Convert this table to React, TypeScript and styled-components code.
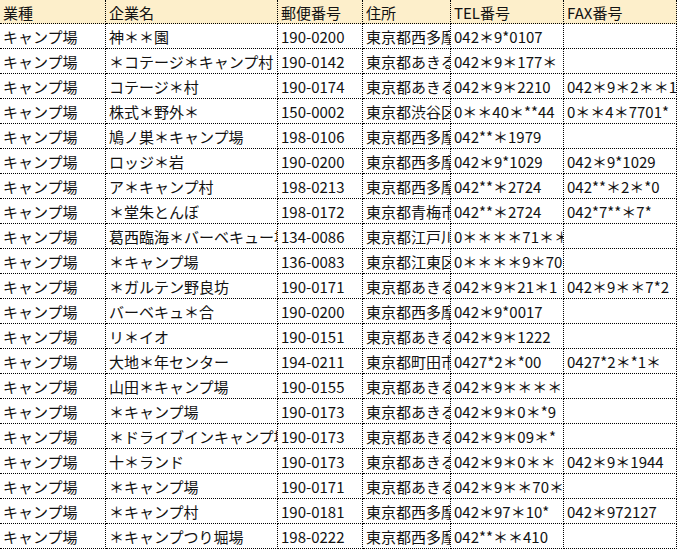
import React from "react";
import styled, { createGlobalStyle } from "styled-components";

const GlobalStyle = createGlobalStyle`
  html, body {
    margin: 0;
    padding: 0;
    background: #ffffff;
  }
  body {
    font-family: "Noto Sans CJK JP", "Noto Sans", sans-serif;
  }
`;

const COLS = [106, 172, 85, 88, 113, 113];

const Sheet = styled.div`
  display: grid;
  grid-template-columns: ${COLS.map((c) => `${c}px`).join(" ")};
  grid-auto-rows: 25px;
  grid-template-rows: 24px;
  width: max-content;
`;

const Cell = styled.div<{ $header?: boolean }>`
  box-sizing: border-box;
  display: flex;
  align-items: center;
  padding: 1px 0 0 3px;
  border-right: 1px dotted #000;
  border-bottom: 1px dotted #000;
  background: ${(p) => (p.$header ? "#fdefcb" : "#ffffff")};
  color: #111;
  font-family: "Noto Sans CJK JP", "Noto Sans", sans-serif;
  font-size: 15px;
  line-height: 1;
  white-space: nowrap;
  overflow: hidden;
`;

const headers = ["業種", "企業名", "郵便番号", "住所", "TEL番号", "FAX番号"];

type Row = [string, string, string, string, string, string];

const rows: Row[] = [
  ["キャンプ場", "神＊＊園", "190-0200", "東京都西多摩郡", "042＊9*0107", ""],
  ["キャンプ場", "＊コテージ＊キャンプ村", "190-0142", "東京都あきる野市", "042＊9＊177＊", ""],
  ["キャンプ場", "コテージ＊村", "190-0174", "東京都あきる野市", "042＊9＊2210", "042＊9＊2＊＊1"],
  ["キャンプ場", "株式＊野外＊", "150-0002", "東京都渋谷区", "0＊＊40＊**44", "0＊＊4＊7701*"],
  ["キャンプ場", "鳩ノ巣＊キャンプ場", "198-0106", "東京都西多摩郡", "042**＊1979", ""],
  ["キャンプ場", "ロッジ＊岩", "190-0200", "東京都西多摩郡", "042＊9*1029", "042＊9*1029"],
  ["キャンプ場", "ア＊キャンプ村", "198-0213", "東京都西多摩郡", "042**＊2724", "042**＊2＊*0"],
  ["キャンプ場", "＊堂朱とんぼ", "198-0172", "東京都青梅市", "042**＊2724", "042*7**＊7*"],
  ["キャンプ場", "葛西臨海＊バーベキュー場", "134-0086", "東京都江戸川区", "0＊＊＊＊71＊＊", ""],
  ["キャンプ場", "＊キャンプ場", "136-0083", "東京都江東区", "0＊＊＊＊9＊70", ""],
  ["キャンプ場", "＊ガルテン野良坊", "190-0171", "東京都あきる野市", "042＊9＊21＊1", "042＊9＊＊7*2"],
  ["キャンプ場", "バーベキュ＊合", "190-0200", "東京都西多摩郡", "042＊9*0017", ""],
  ["キャンプ場", "リ＊イオ", "190-0151", "東京都あきる野市", "042＊9＊1222", ""],
  ["キャンプ場", "大地＊年センター", "194-0211", "東京都町田市", "0427*2＊*00", "0427*2＊*1＊"],
  ["キャンプ場", "山田＊キャンプ場", "190-0155", "東京都あきる野市", "042＊9＊＊＊＊", ""],
  ["キャンプ場", "＊キャンプ場", "190-0173", "東京都あきる野市", "042＊9＊0＊*9", ""],
  ["キャンプ場", "＊ドライブインキャンプ場", "190-0173", "東京都あきる野市", "042＊9＊09＊*", ""],
  ["キャンプ場", "十＊ランド", "190-0173", "東京都あきる野市", "042＊9＊0＊＊", "042＊9＊1944"],
  ["キャンプ場", "＊キャンプ場", "190-0171", "東京都あきる野市", "042＊9＊＊70＊", ""],
  ["キャンプ場", "＊キャンプ村", "190-0181", "東京都西多摩郡", "042＊97＊10*", "042＊972127"],
  ["キャンプ場", "＊キャンプつり堀場", "198-0222", "東京都西多摩郡", "042**＊＊410", ""],
];

export default function App() {
  return (
    <>
      <GlobalStyle />
      <Sheet>
        {headers.map((h) => (
          <Cell key={h} $header>
            {h}
          </Cell>
        ))}
        {rows.map((r, i) =>
          r.map((v, j) => <Cell key={`${i}-${j}`}>{v}</Cell>)
        )}
      </Sheet>
    </>
  );
}
